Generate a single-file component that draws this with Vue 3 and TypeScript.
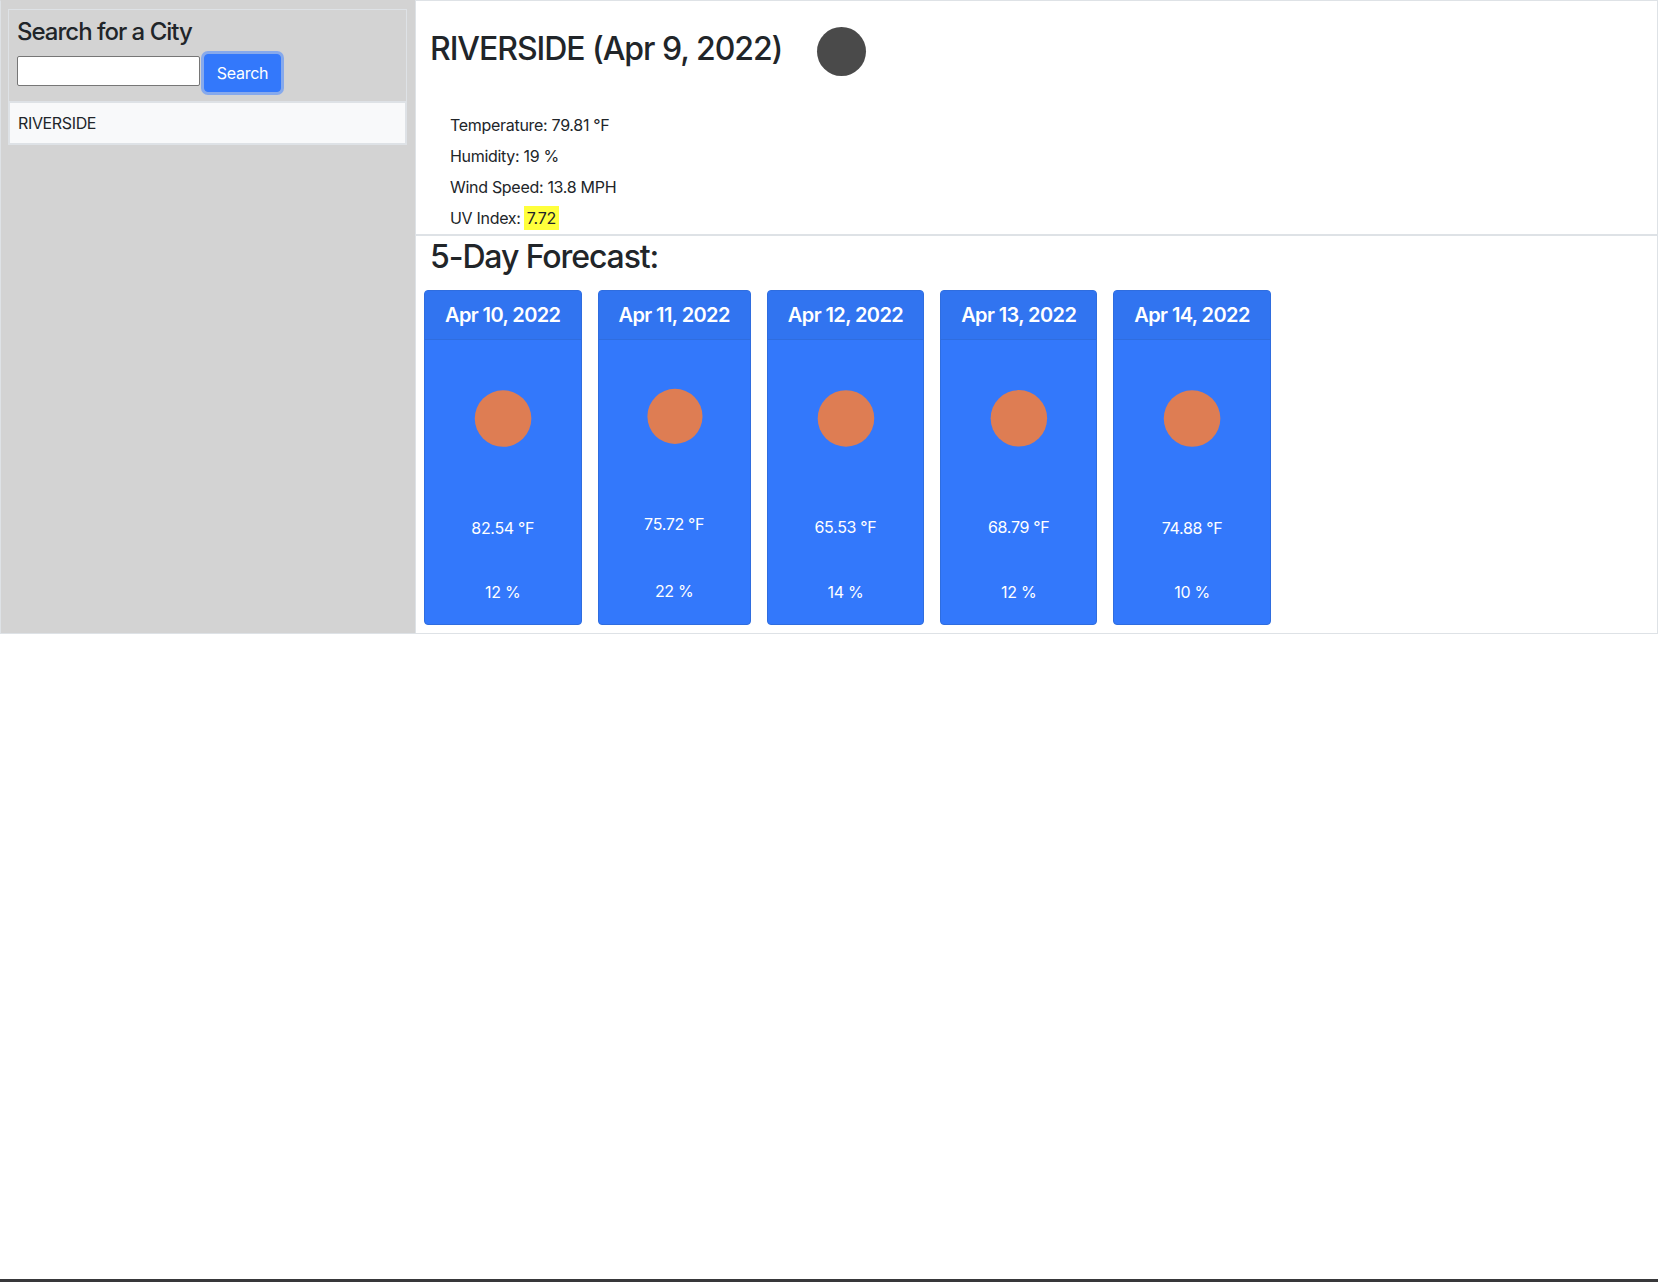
<script setup lang="ts">
interface ForecastDay {
  date: string;
  temp: string;
  humidity: string;
}

const forecast: ForecastDay[] = [
  { date: 'Apr 10, 2022', temp: '82.54 °F', humidity: '12 %' },
  { date: 'Apr 11, 2022', temp: '75.72 °F', humidity: '22 %' },
  { date: 'Apr 12, 2022', temp: '65.53 °F', humidity: '14 %' },
  { date: 'Apr 13, 2022', temp: '68.79 °F', humidity: '12 %' },
  { date: 'Apr 14, 2022', temp: '74.88 °F', humidity: '10 %' },
];
</script>

<template>
  <div class="page">
    <div class="weather">
      <aside class="sidebar">
        <div class="search">
          <h4 class="search-title">Search for a City</h4>
          <div class="search-row">
            <input class="search-input" type="text" />
            <button class="search-btn" type="button">Search</button>
          </div>
        </div>
        <div class="history">RIVERSIDE</div>
      </aside>

      <main class="main">
        <section class="current">
          <div class="current-head">
            <h2 class="city">RIVERSIDE (Apr 9, 2022)</h2>
            <span class="moon"></span>
          </div>
          <p class="stat">Temperature: 79.81 °F</p>
          <p class="stat">Humidity: 19 %</p>
          <p class="stat">Wind Speed: 13.8 MPH</p>
          <p class="stat">UV Index: <span class="uv">7.72</span></p>
        </section>

        <h2 class="forecast-title">5-Day Forecast:</h2>
        <div class="forecast">
          <div v-for="day in forecast" :key="day.date" class="card">
            <div class="card-head">{{ day.date }}</div>
            <svg class="card-icon" viewBox="0 0 100 100">
              <circle cx="50.2" cy="50.5" r="18.2" fill="#de7d53" />
            </svg>
            <div class="card-body">
              <p class="card-text">{{ day.temp }}</p>
              <p class="card-text">{{ day.humidity }}</p>
            </div>
          </div>
        </div>
      </main>
    </div>
    <div class="bottom-bar"></div>
  </div>
</template>

<style>
html,
body {
  margin: 0;
  background: #fff;
}
</style>

<style scoped>
.page {
  min-height: 1282px;
  display: flex;
  flex-direction: column;
  font-family: Inter, 'Liberation Sans', sans-serif;
  font-size: 16px;
  line-height: 24px;
  letter-spacing: -0.3px;
  color: #212529;
}

.weather {
  display: flex;
  height: 634px;
}

.sidebar {
  width: 415px;
  box-sizing: border-box;
  padding: 8px 8px 0 7px;
  background: #d3d3d3;
  border: 1px solid #dee2e6;
  border-top-color: #d3d3d3;
  border-right: 0;
}

.search {
  height: 92px;
  box-sizing: border-box;
  padding: 7px 8px 8px;
  border: 1px solid #dee2e6;
  border-bottom-width: 0;
}

.search-title {
  margin: 0 0 10px;
  font-size: 24px;
  line-height: 29px;
  font-weight: 500;
  letter-spacing: -1px;
}

.search-row {
  display: flex;
  align-items: flex-start;
  gap: 4px;
}

.search-input {
  width: 183px;
  height: 30px;
  box-sizing: border-box;
  padding: 1px 2px;
  border: 1px solid #767676;
  border-radius: 2px;
  background: #fff;
}

.search-btn {
  width: 77px;
  height: 38px;
  margin-top: -2px;
  padding: 0;
  border: 1px solid #3378fb;
  border-radius: 4px;
  background: #3378fb;
  color: #fff;
  font: inherit;
  letter-spacing: inherit;
  box-shadow: 0 0 0 3px #86a9ec;
}

.history {
  height: 44px;
  box-sizing: border-box;
  padding: 0 8px;
  display: flex;
  align-items: center;
  background: #f8f9fa;
  border: 2px solid #dee2e6;
  letter-spacing: -0.35px;
}

.main {
  flex: 1;
  min-width: 0;
  box-sizing: border-box;
  border: 1px solid #dee2e6;
  padding-bottom: 8px;
  display: flex;
  flex-direction: column;
}

.current {
  height: 235px;
  box-sizing: border-box;
  padding: 0 14px;
  border-bottom: 2px solid #dee2e6;
}

.current-head {
  display: flex;
  align-items: flex-start;
  gap: 35px;
  height: 112px;
}

.city,
.forecast-title {
  margin: 0;
  font-size: 32px;
  line-height: 38px;
  font-weight: 500;
  letter-spacing: -1.05px;
}

.city {
  margin-top: 29px;
}

.moon {
  width: 49px;
  height: 49px;
  margin-top: 26px;
  border-radius: 50%;
  background: #4a4a4a;
}

.stat {
  margin: 0 0 7px 20px;
}

.uv {
  display: inline-block;
  margin-left: -1px;
  padding: 0 3px;
  background: #ffff3c;
  color: #212529;
}

.forecast-title {
  padding-left: 14px;
  margin-top: 2px;
  letter-spacing: -1.1px;
}

.forecast {
  display: flex;
  align-items: stretch;
  gap: 16px;
  padding: 14px 8px 0;
  flex: 1;
}

.card {
  display: flex;
  flex-direction: column;
  box-sizing: border-box;
  border: 1px solid #2f6ddf;
  border-radius: 4px;
  background: #3378fb;
  color: #fff;
  overflow: hidden;
}

.card-head {
  padding: 12px 20px;
  font-size: 20px;
  line-height: 24px;
  font-weight: 600;
  letter-spacing: -0.6px;
  text-align: center;
  white-space: nowrap;
  background: #3174f0;
  border-bottom: 1px solid #2f6ddf;
}

.card-icon {
  display: block;
  width: 0;
  min-width: 100%;
  aspect-ratio: 1;
  flex: none;
}

.card-body {
  flex: 1;
  display: flex;
  flex-direction: column;
  justify-content: space-around;
}

.card-text {
  margin: 0;
  text-align: center;
}

.bottom-bar {
  margin-top: auto;
  height: 3px;
  background: #38383a;
}
</style>
